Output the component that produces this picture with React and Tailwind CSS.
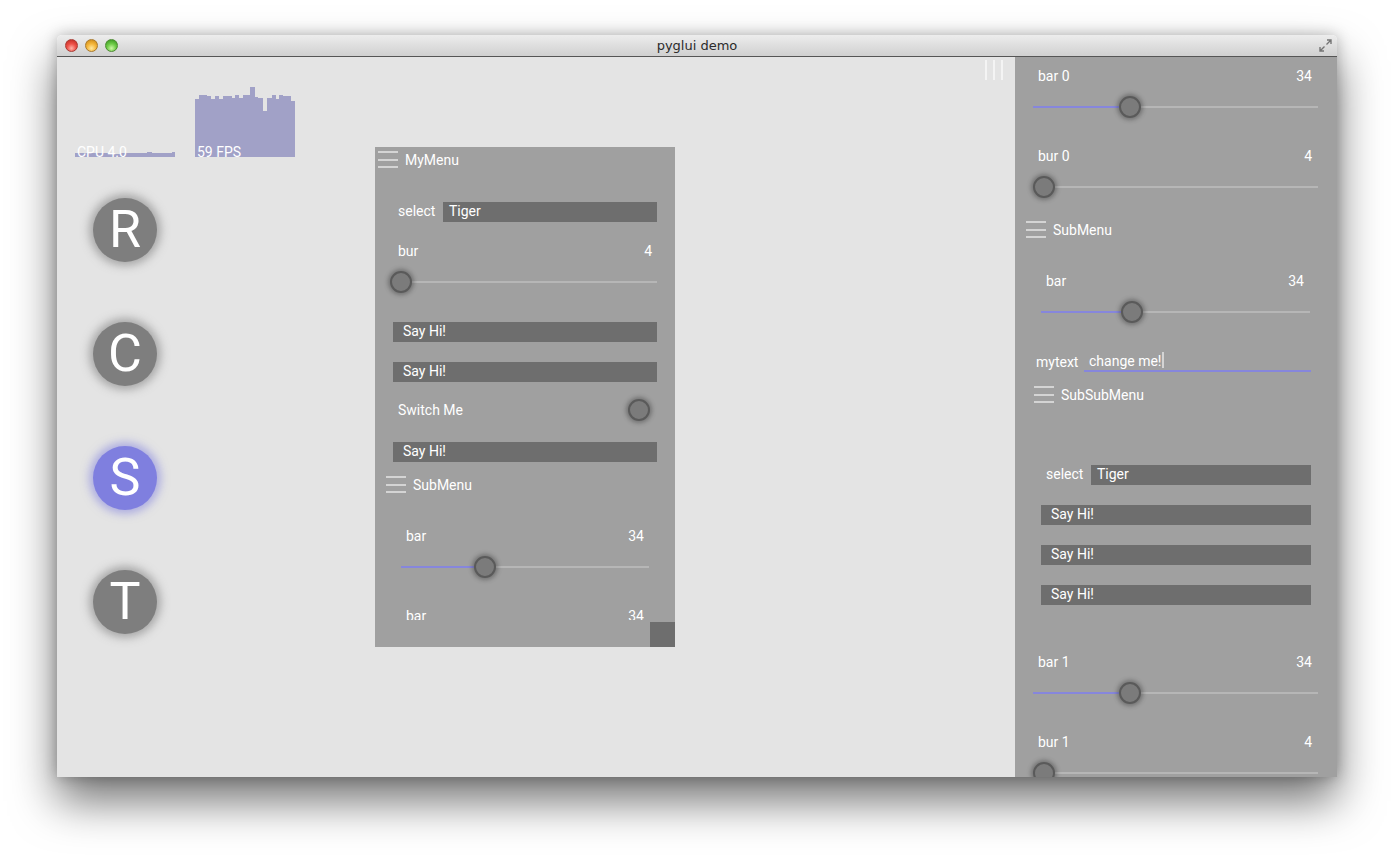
import React from 'react'

// fps / cpu history: [x0, x1, height]
const FPS = [
  [0, 4, 58], [4, 12, 62], [12, 16, 61], [16, 20, 58], [20, 24, 61], [24, 28, 58],
  [28, 37, 61], [37, 40, 59], [40, 44, 62], [44, 48, 59], [48, 55, 62], [55, 60, 70],
  [60, 63, 60], [63, 68, 59], [68, 72, 46], [72, 77, 59], [77, 81, 62], [81, 84, 58],
  [84, 88, 62], [88, 92, 61], [92, 96, 61], [96, 100, 56],
]
const CPU = [[0, 40, 4], [40, 46, 3], [46, 72, 4], [72, 77, 5], [77, 97, 4], [97, 100, 5]]

function stepPath(data, h) {
  let d = `M0 ${h}`
  data.forEach(([x0, x1, v]) => {
    d += ` L${x0} ${h - v} L${x1} ${h - v}`
  })
  return d + ` L100 ${h} Z`
}

function Graph({ data, label }) {
  return (
    <div className="relative w-[100px] h-[70px]">
      <svg width="100" height="70" className="block">
        <path d={stepPath(data, 70)} fill="#a1a1c7" />
      </svg>
      <span className="absolute left-[2px] bottom-[-4px] text-[14px] leading-[18px] text-white whitespace-nowrap">
        {label}
      </span>
    </div>
  )
}

function RoundButton({ letter, active }) {
  return (
    <div
      className={`w-[64px] h-[64px] rounded-full flex items-center justify-center text-[52px] leading-none text-white ${
        active
          ? 'bg-[#7f7fdf] shadow-[0_0_8px_4px_rgba(127,127,223,0.55)]'
          : 'bg-[#7e7e7e] shadow-[0_0_8px_4px_rgba(110,110,110,0.5)]'
      }`}
    >
      {letter}
    </div>
  )
}

function Knob() {
  return (
    <div className="w-[22px] h-[22px] rounded-full bg-[#7b7b7b] border-2 border-[#5a5a5a] shadow-[0_0_4px_2px_rgba(60,60,60,0.45)]" />
  )
}

function Hamburger() {
  return (
    <div className="w-[20px] h-[17px] flex flex-col justify-between">
      <div className="h-[2px] bg-[#d4d4d4]" />
      <div className="h-[2px] bg-[#d4d4d4]" />
      <div className="h-[2px] bg-[#d4d4d4]" />
    </div>
  )
}

function MenuHeader({ title, cls }) {
  return (
    <div className={`h-[25px] flex items-center gap-[7px] ${cls}`}>
      <Hamburger />
      <span className="text-[14px] leading-[18px] text-white">{title}</span>
    </div>
  )
}

function Slider({ label, value, pct, labelCls, trackCls }) {
  return (
    <div className="h-[80px] pt-[10px]">
      <div className={`flex justify-between h-[18px] text-[14px] leading-[18px] text-white ${labelCls}`}>
        <span>{label}</span>
        <span>{value}</span>
      </div>
      <div className={`mt-[11px] ${trackCls}`}>
        <div className="relative h-[22px]">
          <div className="absolute left-0 right-0 top-[10px] h-[2px] bg-[#b6b6b6]" />
          <div className="absolute left-0 top-[10px] h-[2px] bg-[#8686dc]" style={{ width: `${pct}%` }} />
          <div className="absolute top-0 -ml-[11px]" style={{ left: `${pct}%` }}>
            <Knob />
          </div>
        </div>
      </div>
    </div>
  )
}

function Select({ cls }) {
  return (
    <div className={`h-[40px] flex items-center text-[14px] text-white ${cls}`}>
      <span className="w-[45px] shrink-0 leading-[18px] pb-[2px]">select</span>
      <div className="flex-1 h-[20px] bg-[#6e6e6e] pl-[6px] leading-[18px]">Tiger</div>
    </div>
  )
}

function SayHi({ cls }) {
  return (
    <div className={`h-[40px] flex items-center ${cls}`}>
      <div className="w-full h-[20px] bg-[#6e6e6e] pl-[10px] text-[14px] leading-[18px] text-white">Say Hi!</div>
    </div>
  )
}

function Switch() {
  return (
    <div className="h-[40px] pb-[5px] flex items-center justify-between pl-[23px] pr-[25px] text-[14px] leading-[18px] text-white">
      <span>Switch Me</span>
      <Knob />
    </div>
  )
}

function TextInput() {
  return (
    <div className="h-[40px] flex items-center pl-[21px] pr-[26px] text-[14px] text-white">
      <span className="w-[48px] shrink-0 leading-[18px]">mytext</span>
      <div className="flex-1 h-[20px] border-b-2 border-[#8686dc] pl-[5px] leading-[18px] flex items-start">
        <span>change me!</span>
        <span className="inline-block w-[2px] h-[16px] bg-[#d4d4d4] ml-[1px]" />
      </div>
    </div>
  )
}

function FloatingMenu() {
  return (
    <div className="absolute left-[318px] top-[90px] w-[300px] h-[500px] bg-[#a0a0a0] flex flex-col">
      <div className="h-[473px] overflow-hidden">
        <MenuHeader title="MyMenu" cls="pl-[3px]" />
        <div className="h-[20px]" />
        <Select cls="pl-[23px] pr-[18px]" />
        <Slider label="bur" value="4" pct={3} labelCls="pl-[23px] pr-[23px]" trackCls="pl-[18px] pr-[18px]" />
        <SayHi cls="px-[18px]" />
        <SayHi cls="px-[18px]" />
        <Switch />
        <SayHi cls="px-[18px]" />
        <MenuHeader title="SubMenu" cls="pl-[11px]" />
        <div className="h-[20px]" />
        <Slider label="bar" value="34" pct={34} labelCls="pl-[31px] pr-[31px]" trackCls="px-[26px]" />
        <Slider label="bar" value="34" pct={34} labelCls="pl-[31px] pr-[31px]" trackCls="px-[26px]" />
      </div>
      <div className="mt-[2px] flex justify-end">
        <div className="w-[25px] h-[25px] bg-[#6e6e6e]" />
      </div>
    </div>
  )
}

function RightPanel() {
  return (
    <div className="w-[322px] shrink-0 bg-[#a0a0a0] overflow-hidden">
      <Slider label="bar 0" value="34" pct={34} labelCls="pl-[23px] pr-[25px]" trackCls="pl-[18px] pr-[19px]" />
      <Slider label="bur 0" value="4" pct={4} labelCls="pl-[23px] pr-[25px]" trackCls="pl-[18px] pr-[19px]" />
      <MenuHeader title="SubMenu" cls="pl-[11px]" />
      <div className="h-[20px]" />
      <Slider label="bar" value="34" pct={34} labelCls="pl-[31px] pr-[33px]" trackCls="pl-[26px] pr-[27px]" />
      <TextInput />
      <MenuHeader title="SubSubMenu" cls="pl-[19px]" />
      <div className="h-[48px]" />
      <Select cls="pl-[31px] pr-[26px]" />
      <SayHi cls="px-[26px]" />
      <SayHi cls="px-[26px]" />
      <SayHi cls="px-[26px]" />
      <div className="h-[28px]" />
      <Slider label="bar 1" value="34" pct={34} labelCls="pl-[23px] pr-[25px]" trackCls="pl-[18px] pr-[19px]" />
      <Slider label="bur 1" value="4" pct={4} labelCls="pl-[23px] pr-[25px]" trackCls="pl-[18px] pr-[19px]" />
    </div>
  )
}

function TitleBar() {
  return (
    <div className="h-[22px] shrink-0 grid grid-cols-[1fr_auto_1fr] items-center bg-gradient-to-b from-[#ededed] to-[#d0d0d0] border-b border-[#555555]">
      <div className="flex items-center gap-[7px] pl-[8px]">
        <div className="w-[13px] h-[13px] rounded-full border border-[#a93a33] bg-[radial-gradient(circle_at_50%_75%,#ffb3a8_0%,#ee5148_45%,#b8261d_100%)]" />
        <div className="w-[13px] h-[13px] rounded-full border border-[#a9792b] bg-[radial-gradient(circle_at_50%_75%,#ffe9a0_0%,#f5b73c_45%,#c58210_100%)]" />
        <div className="w-[13px] h-[13px] rounded-full border border-[#4c8a31] bg-[radial-gradient(circle_at_50%_75%,#cdf7a6_0%,#6fcc48_45%,#2f8d1b_100%)]" />
      </div>
      <div className="font-['DejaVu_Sans',sans-serif] text-[13px] leading-[20px] text-[#2b2b2b]">pyglui demo</div>
      <div className="flex justify-end pr-[4px]">
        <svg width="15" height="15" viewBox="0 0 15 15" fill="none" stroke="#747474" strokeWidth="1.4">
          <path d="M9 2h4v4M13 2L8.5 6.5" />
          <path d="M2 9v4h4M2 13l4.5-4.5" />
        </svg>
      </div>
    </div>
  )
}

export default function App() {
  return (
    <div className="w-[1394px] h-[856px] bg-white pl-[57px] pt-[35px] font-['Roboto',sans-serif]">
      <div className="w-[1280px] h-[742px] flex flex-col rounded-t-[5px] overflow-hidden shadow-[0_24px_45px_rgba(0,0,0,0.55),0_0_14px_rgba(0,0,0,0.25)]">
        <TitleBar />
        <div className="h-[720px] flex">
          <div className="relative flex-1 bg-[#e4e4e4]">
            <div className="flex gap-[20px] pt-[30px] pl-[18px]">
              <Graph data={CPU} label="CPU 4.0" />
              <Graph data={FPS} label="59 FPS" />
            </div>
            <div className="mt-[41px] pl-[36px] flex flex-col gap-[60px]">
              <RoundButton letter="R" />
              <RoundButton letter="C" />
              <RoundButton letter="S" active />
              <RoundButton letter="T" />
            </div>
            <FloatingMenu />
            <div className="absolute top-[3px] right-[12px] flex gap-[6px]">
              <div className="w-[2px] h-[20px] bg-[#f4f4f4]" />
              <div className="w-[2px] h-[20px] bg-[#f4f4f4]" />
              <div className="w-[2px] h-[20px] bg-[#f4f4f4]" />
            </div>
          </div>
          <RightPanel />
        </div>
      </div>
    </div>
  )
}
